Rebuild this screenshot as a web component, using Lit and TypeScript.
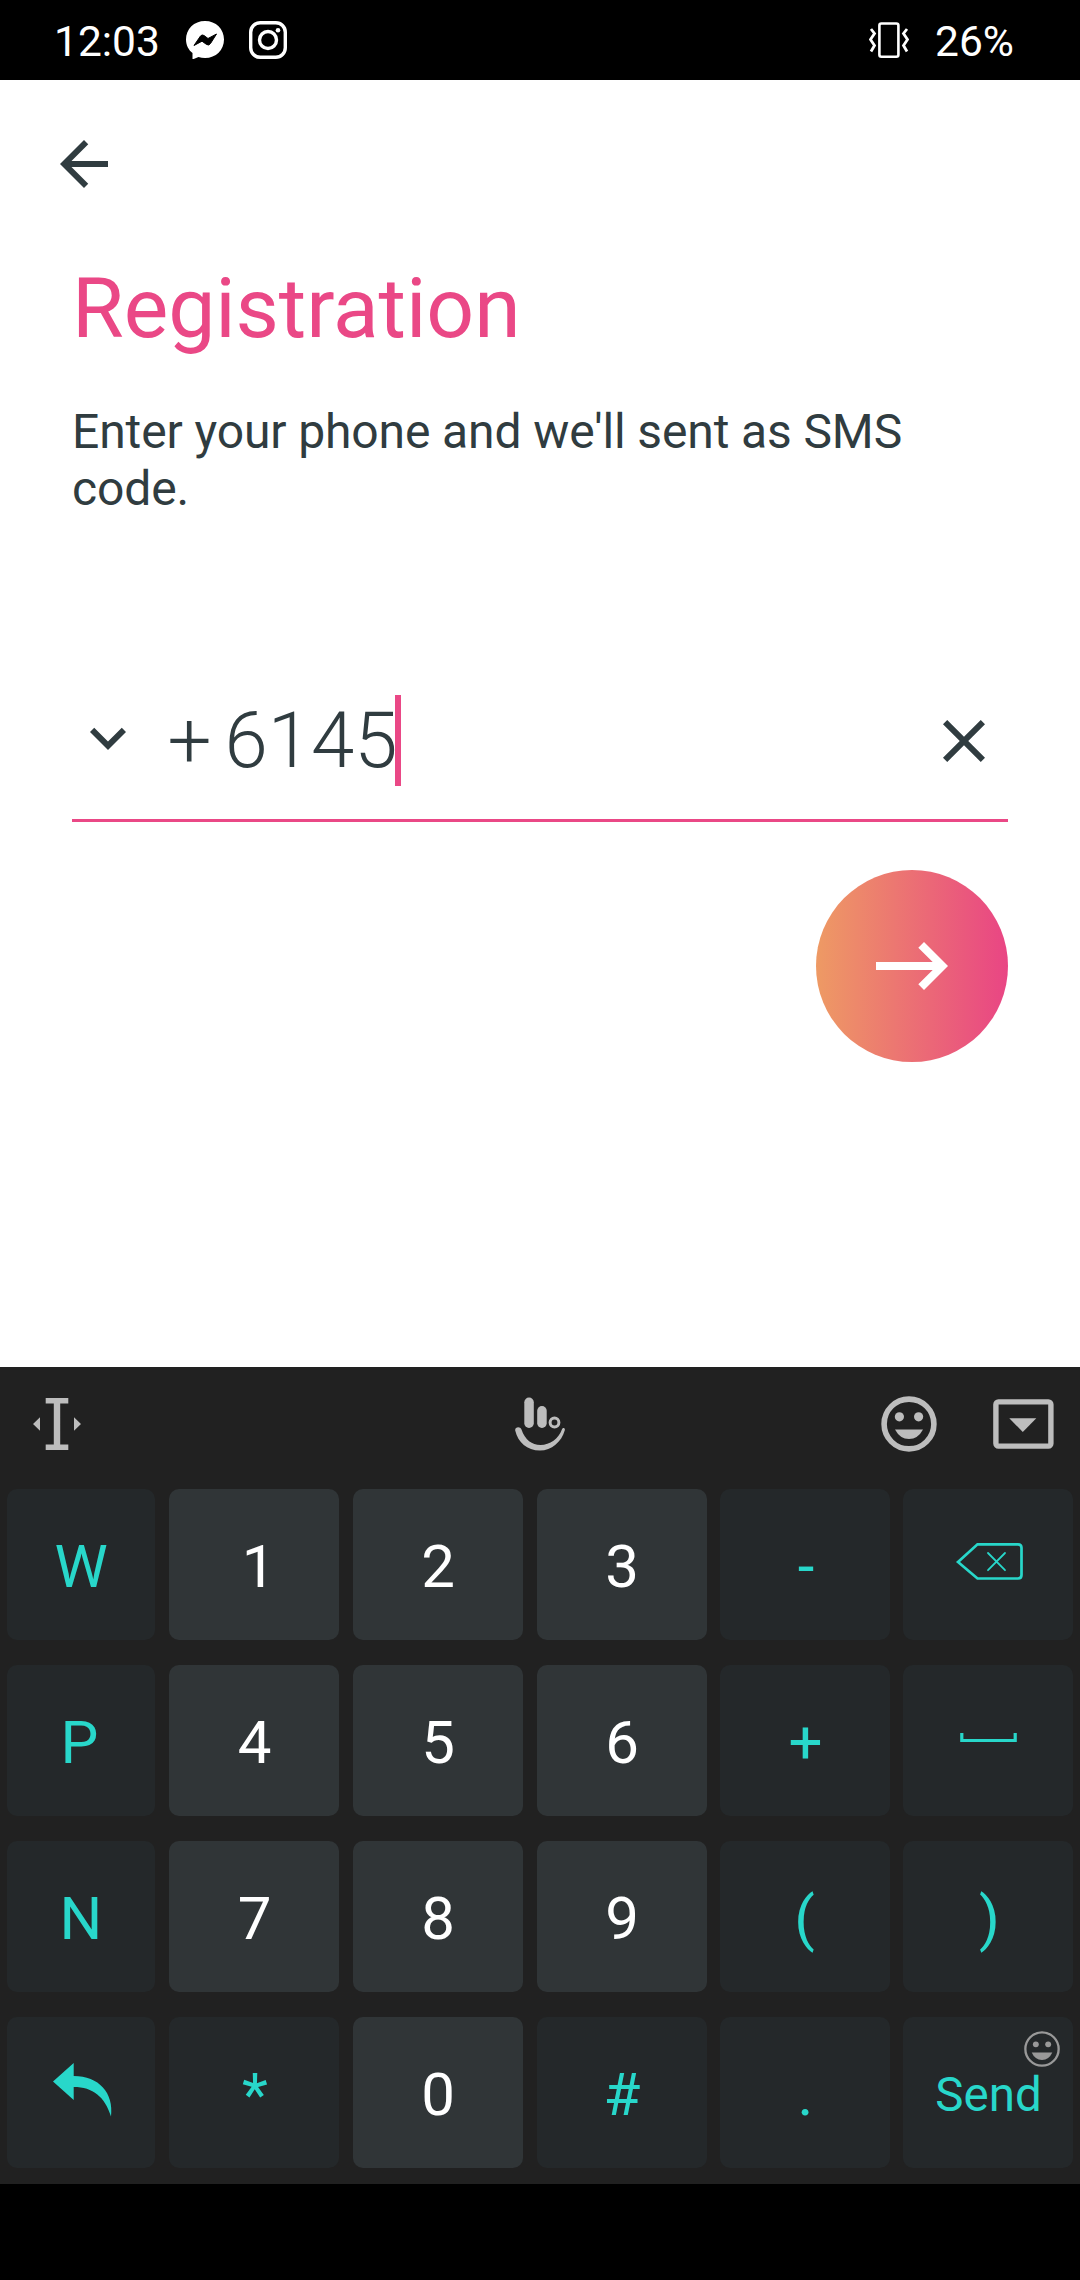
import { LitElement, html, css, svg, TemplateResult } from "lit";
import { customElement } from "lit/decorators.js";
import { styleMap } from "lit/directives/style-map.js";

interface Key {
  label?: string;
  icon?: TemplateResult;
  kind: "digit" | "fn";
  small?: boolean;
  badge?: boolean;
  /** Optical centring: pixels added before the glyph. */
  indent?: number;
}

const face = (stroke: number) => svg`
  <circle cx="28" cy="28" r=${27.7 - stroke / 2} fill="none" stroke="currentColor" stroke-width=${stroke}/>
  <circle cx="18.4" cy="20.8" r="4.6" fill="currentColor"/>
  <circle cx="37.6" cy="20.8" r="4.6" fill="currentColor"/>`;

const backspace = html`<svg viewBox="0 0 170 151" width="170" height="151">
  <path d="M55 73 74.500 55.300H115Q118.500 55.300 118.500 58.800V86Q118.500 89.500 115 89.500H74.500Z" fill="none" stroke="currentColor" stroke-width="2.700"/>
  <path d="M85 64 102 81.200M102 64 85 81.200" fill="none" stroke="currentColor" stroke-width="1.800" stroke-linecap="round"/>
</svg>`;

const space = html`<svg viewBox="0 0 170 151" width="170" height="151">
  <path d="M58.800 68V75.500H112.200V68" fill="none" stroke="currentColor" stroke-width="3.200"/>
</svg>`;

const undo = html`<svg viewBox="0 0 148 151" width="148" height="151">
  <path d="M46 64.500 66.700 46V59C92 59 107 76 104 99.500C98 80 86 70 66.700 70V83Z" fill="currentColor"/>
</svg>`;

const keys: Key[] = [
  { label: "W", kind: "fn" },
  { label: "1", kind: "digit", indent: 9 },
  { label: "2", kind: "digit" },
  { label: "3", kind: "digit" },
  { label: "-", kind: "fn", indent: 2 },
  { icon: backspace, kind: "fn" },
  { label: "P", kind: "fn", indent: -3 },
  { label: "4", kind: "digit", indent: 1 },
  { label: "5", kind: "digit" },
  { label: "6", kind: "digit" },
  { label: "+", kind: "fn", indent: 1 },
  { icon: space, kind: "fn" },
  { label: "N", kind: "fn" },
  { label: "7", kind: "digit", indent: 1 },
  { label: "8", kind: "digit" },
  { label: "9", kind: "digit" },
  { label: "(", kind: "fn", indent: -1 },
  { label: ")", kind: "fn", indent: 3 },
  { icon: undo, kind: "fn" },
  { label: "*", kind: "fn", indent: 2 },
  { label: "0", kind: "digit" },
  { label: "#", kind: "fn" },
  { label: ".", kind: "fn", indent: 1 },
  { label: "Send", kind: "fn", small: true, badge: true, indent: 1 },
];

@customElement("status-bar")
export class StatusBar extends LitElement {
  static styles = css`
    :host {
      display: flex;
      align-items: center;
      height: 80px;
      box-sizing: border-box;
      padding: 0 66px 0 54px;
      background: #000;
      color: #fff;
      font: 42.5px/83px Roboto, sans-serif;
    }
    svg { display: block; flex: none; }
    .clock { width: 132px; height: 80px; }
    .chat { margin-right: 25px; }
    .spacer { flex: 1; }
    .battery { width: 79px; margin-left: 26px; height: 80px; }
  `;
  render() {
    return html`
      <span class="clock">12:03</span>
      <svg class="chat" width="38" height="38" viewBox="0 0 38 38">
        <path fill="#fff" d="M19 0C8 0 0 8 0 18.500C0 24 2.500 29 6.500 32V38.500L12.500 36C14.500 36.700 16.700 37 19 37C30 37 38 29 38 18.500C38 8 30 0 19 0Z"/>
        <path fill="#000" d="M8 24.500 14.500 15Q16 13.200 18 14.500L22 17.500 30.500 13 24.500 22.500Q22.800 25 20.500 23.400L16 20.200Z" stroke="#000" stroke-linejoin="round"/>
      </svg>
      <svg width="38" height="38" viewBox="0 0 38 38">
        <rect x="1.700" y="1.700" width="34.600" height="34.600" rx="9.500" fill="none" stroke="#fff" stroke-width="3.400"/>
        <circle cx="19" cy="19" r="8.500" fill="none" stroke="#fff" stroke-width="3.400"/>
        <circle cx="29" cy="9.200" r="2.300" fill="#fff"/>
      </svg>
      <span class="spacer"></span>
      <svg width="40" height="38" viewBox="0 0 40 38" fill="none" stroke="#fff">
        <rect x="10.400" y="2.500" width="19" height="33.200" rx="2" stroke-width="2.600"/>
        <path stroke-width="2.800" d="M2 8 5.500 12.500 1.500 18.500 5.500 24.500 2 30.500M38 8 34.500 12.500 38.500 18.500 34.500 24.500 38 30.500"/>
      </svg>
      <span class="battery">26%</span>`;
  }
}

@customElement("phone-form")
export class PhoneForm extends LitElement {
  static styles = css`
    :host {
      display: flex;
      flex-direction: column;
      height: 1287px;
      box-sizing: border-box;
      padding: 48px 72px 0;
      background: #fff;
      color: #303c40;
      font-family: Roboto, sans-serif;
    }
    svg { display: block; flex: none; }
    .back { margin-left: -24px; }
    h1 {
      margin: 60px 0 45px;
      font: 400 84px/98px Roboto, sans-serif;
      letter-spacing: -0.08px;
      color: #ea4886;
    }
    p { margin: 0; height: 114px; font-size: 48px; line-height: 57px; letter-spacing: -0.12px; }
    .field {
      display: flex;
      align-items: center;
      height: 157px;
      margin-top: 145px;
      border-bottom: 3px solid #ea4886;
      font-size: 78px;
      font-weight: 300;
      line-height: 91px;
    }
    .down { margin-bottom: 5px; }
    .plus { width: 57px; margin-left: 23.5px; }
    .digits { width: 170.5px; white-space: nowrap; }
    .caret { width: 6px; height: 91px; background: #ea4886; }
    .clear { margin: 1px 8px 0 auto; }
    .next {
      display: flex;
      align-items: center;
      justify-content: center;
      align-self: flex-end;
      width: 192px;
      height: 192px;
      margin-top: 48px;
      border-radius: 50%;
      background: linear-gradient(90deg, #ee9a64, #e94584);
    }
  `;
  render() {
    return html`
      <svg class="back" width="72" height="72" viewBox="0 0 24 24" fill="#303c40">
        <path d="M20 11H7.830l5.590-5.590L12 4l-8 8 8 8 1.410-1.410L7.830 13H20v-2z"/>
      </svg>
      <h1>Registration</h1>
      <p>Enter your phone and we'll sent as SMS code.</p>
      <div class="field">
        <svg class="down" width="72" height="72" viewBox="0 0 24 24" fill="#303c40">
          <path d="M7.410 8.590 12 13.170l4.590-4.580L18 10l-6 6-6-6z"/>
        </svg>
        <span class="plus">+</span>
        <span class="digits">6145</span>
        <span class="caret"></span>
        <svg class="clear" width="72" height="72" viewBox="0 0 24 24" fill="#303c40">
          <path d="M19 6.410 17.590 5 12 10.590 6.410 5 5 6.410 10.590 12 5 17.590 6.410 19 12 13.410 17.590 19 19 17.590 13.410 12z"/>
        </svg>
      </div>
      <div class="next">
        <svg width="72" height="48" viewBox="0 0 72 48" fill="#fff">
          <path d="M72 24 48 0 42.300 5.700 56.700 20H0v8h56.700L42.300 42.300 48 48z"/>
        </svg>
      </div>`;
  }
}

@customElement("key-pad")
export class KeyPad extends LitElement {
  static styles = css`
    :host {
      display: block;
      height: 817px;
      background: #212121;
      font-family: Roboto, sans-serif;
    }
    svg { display: block; flex: none; }
    .tools {
      display: flex;
      align-items: center;
      height: 114px;
      margin-bottom: 8px;
      padding: 0 26px 0 33px;
      color: #bdbdbd;
    }
    .hand { margin-left: 434px; }
    .smile { margin-left: auto; margin-right: 56px; }
    .grid {
      display: grid;
      grid-template-columns: 162px 184px 184px 183px 183px 170px;
      grid-auto-rows: 151px;
      row-gap: 25px;
      padding-left: 7px;
    }
    .key {
      position: relative;
      display: flex;
      justify-content: center;
      margin-right: 14px;
      border-radius: 10px;
      font-size: 60px;
      line-height: 155px;
    }
    .key:nth-child(6n + 4),
    .key:nth-child(6n + 5) { margin-right: 13px; }
    .key:nth-child(6n) { margin-right: 0; }
    .digit { background: #303537; color: #fff; }
    .fn { background: #24282a; color: #28d7ca; }
    .small { font-size: 47.5px; line-height: 156px; }
    .badge { position: absolute; top: 14px; right: 13px; color: #999; }
  `;
  render() {
    return html`
      <div class="tools">
        <svg width="48" height="52" viewBox="0 0 48 52" fill="currentColor">
          <path d="M12.700 0H35.300V5.500H27.200V46.500H35.300V52H12.700V46.500H20.800V5.500H12.700ZM0 26 7 19.300V32.700ZM48 26 41 19.300V32.700Z"/>
        </svg>
        <svg class="hand" width="50" height="54" viewBox="0 0 50 54" fill="currentColor">
          <rect x="9.300" y="0.500" width="9.500" height="30.500" rx="4.700"/>
          <rect x="22.200" y="9" width="9.500" height="22" rx="4.700"/>
          <circle cx="39.500" cy="25.500" r="4.400" fill="none" stroke="currentColor" stroke-width="3"/>
          <path d="M0.200 33.500C-0.300 29.500 5.300 29 6.500 32.500C10 43 17 48 25.500 48C35 48 43.500 42 47 32.300C47.800 30 50.400 30.700 49.800 33.200C46.500 45 36.500 53.500 25 53.500C12 53.500 3 45.500 0.200 33.500Z"/>
        </svg>
        <svg class="smile" width="56" height="56" viewBox="0 0 56 56">
          ${face(5.6)}
          <path d="M14 33.500H42Q37 43 28 43T14 33.500Z" fill="currentColor"/>
        </svg>
        <svg width="61" height="50" viewBox="0 0 61 50">
          <rect x="2.900" y="2.900" width="55" height="44.200" rx="2.500" fill="none" stroke="currentColor" stroke-width="5.400"/>
          <path d="M16.300 19.300H43.300L29.800 33Z" fill="currentColor"/>
        </svg>
      </div>
      <div class="grid">
        ${keys.map(
          (k) => html`<div class="key ${k.kind} ${k.small ? "small" : ""}">
            ${k.icon ??
            html`<span style=${styleMap({ marginLeft: `${k.indent ?? 0}px` })}>${k.label}</span>`}
            ${k.badge
              ? html`<svg class="badge" width="36" height="36" viewBox="0 0 56 56">
                  ${face(3.6)}
                  <path d="M12 33.500H44Q39 45 28 45T12 33.500Z" fill="currentColor"/>
                </svg>`
              : ""}
          </div>`
        )}
      </div>`;
  }
}

@customElement("app-root")
export class AppRoot extends LitElement {
  static styles = css`
    :host {
      display: flex;
      flex-direction: column;
      width: 1080px;
      height: 2280px;
      overflow: hidden;
      background: #000;
    }
  `;
  render() {
    return html`<status-bar></status-bar><phone-form></phone-form><key-pad></key-pad>`;
  }
}
